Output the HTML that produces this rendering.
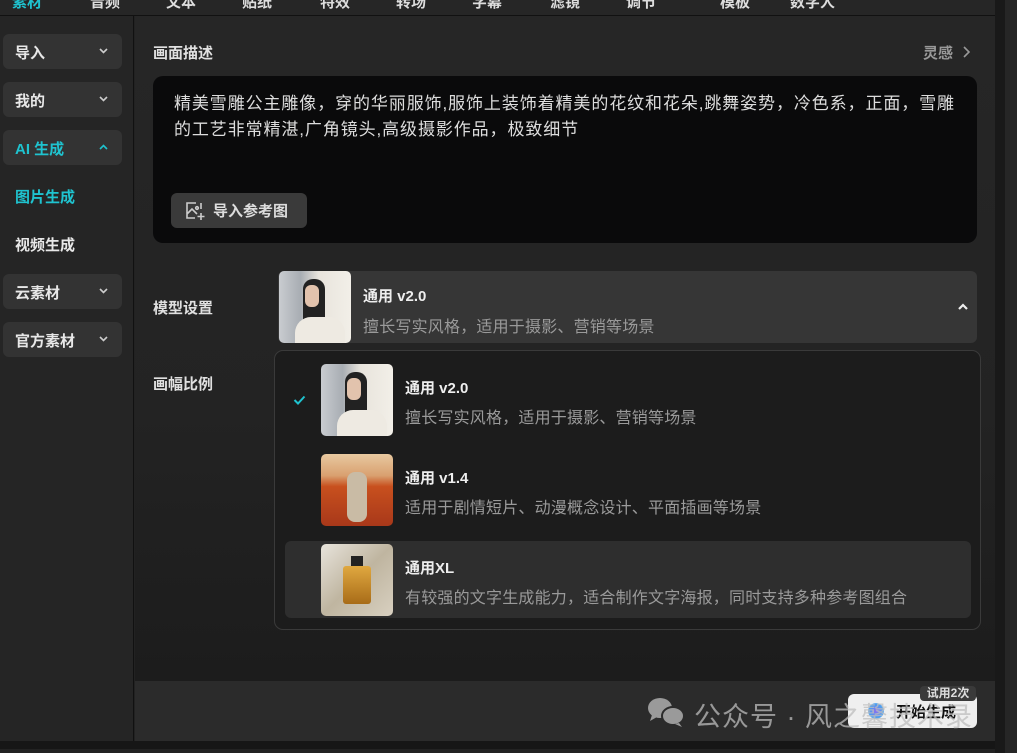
<!DOCTYPE html>
<html><head><meta charset="utf-8"><style>
*{margin:0;padding:0;box-sizing:border-box}
body{width:1017px;height:753px;overflow:hidden;background:#222;font-family:"Liberation Sans","Noto Sans CJK SC",sans-serif;position:relative;color:#ddd}
.a{position:absolute}
.top{left:0;top:0;width:995px;height:16px;background:#262626;border-bottom:1px solid #111;overflow:hidden}
.top span{position:absolute;top:-9px;font-size:15px;font-weight:bold;color:#ddd}
.side{left:0;top:16px;width:134px;height:725px;background:#252525;border-right:1px solid #111}
.sb{left:3px;width:119px;height:35px;background:#333;border-radius:6px;font-size:15px;font-weight:bold;color:#e8e8e8;padding:8px 0 0 12px}
.sb svg{position:absolute;right:14px;top:14px}
.main{left:135px;top:16px;width:860px;height:665px;background:linear-gradient(#262626 0%,#232323 60%,#1c1c1c 100%)}
.lbl{font-size:15px;font-weight:bold;color:#e0e0e0}
.thumb{border-radius:5px;overflow:hidden}
.t1{font-size:15px;font-weight:bold;color:#eee}
.t2{font-size:16px;color:#9a9a9a;letter-spacing:0.2px}
</style></head><body>
<div class="a top">
<span style="left:12px;color:#1fc3cf">素材</span><span style="left:90px">音频</span><span style="left:166px">文本</span><span style="left:242px">贴纸</span><span style="left:320px">特效</span><span style="left:396px">转场</span><span style="left:472px">字幕</span><span style="left:550px">滤镜</span><span style="left:626px">调节</span><span style="left:720px">模板</span><span style="left:790px">数字人</span>
</div>
<div class="a side"></div>
<div class="a sb" style="top:34px">导入<svg width="9" height="6" viewBox="0 0 9 6"><path d="M1 1l3.5 3.5L8 1" stroke="#ccc" stroke-width="1.6" fill="none"/></svg></div>
<div class="a sb" style="top:82px">我的<svg width="9" height="6" viewBox="0 0 9 6"><path d="M1 1l3.5 3.5L8 1" stroke="#ccc" stroke-width="1.6" fill="none"/></svg></div>
<div class="a sb" style="top:130px;color:#1fc3cf">AI 生成<svg width="9" height="6" viewBox="0 0 9 6"><path d="M1 5l3.5-3.5L8 5" stroke="#1fc3cf" stroke-width="1.6" fill="none"/></svg></div>
<div class="a" style="left:15px;top:186px;font-size:15px;font-weight:bold;color:#1fc3cf">图片生成</div>
<div class="a" style="left:15px;top:234px;font-size:15px;font-weight:bold;color:#e8e8e8">视频生成</div>
<div class="a sb" style="top:274px">云素材<svg width="9" height="6" viewBox="0 0 9 6"><path d="M1 1l3.5 3.5L8 1" stroke="#ccc" stroke-width="1.6" fill="none"/></svg></div>
<div class="a sb" style="top:322px">官方素材<svg width="9" height="6" viewBox="0 0 9 6"><path d="M1 1l3.5 3.5L8 1" stroke="#ccc" stroke-width="1.6" fill="none"/></svg></div>

<div class="a main"></div>
<div class="a" style="left:995px;top:0;width:10px;height:753px;background:#191919"></div>
<div class="a" style="left:1005px;top:0;width:12px;height:753px;background:#262626"></div>
<div class="a lbl" style="left:153px;top:42px">画面描述</div>
<div class="a" style="left:923px;top:42px;font-size:15px;font-weight:bold;color:#999">灵感</div>
<svg class="a" style="left:962px;top:45px" width="9" height="14" viewBox="0 0 9 14"><path d="M2 2l5 5-5 5" stroke="#999" stroke-width="1.6" fill="none"/></svg>
<div class="a" style="left:153px;top:76px;width:824px;height:167px;background:#0a0a0b;border-radius:10px"></div>
<div class="a" style="left:174px;top:91px;width:800px;font-size:17px;line-height:26px;color:#ddd;letter-spacing:0.9px;white-space:nowrap">精美雪雕公主雕像，穿的华丽服饰,服饰上装饰着精美的花纹和花朵,跳舞姿势，冷色系，正面，雪雕<br>的工艺非常精湛,广角镜头,高级摄影作品，极致细节</div>
<div class="a" style="left:171px;top:193px;width:136px;height:35px;background:#3a3a3a;border-radius:6px;font-size:15px;font-weight:bold;color:#ddd;padding:7px 0 0 42px">导入参考图</div>
<svg class="a" style="left:184px;top:200px" width="22" height="22" viewBox="0 0 22 22" fill="none" stroke="#ccc" stroke-width="1.6"><path d="M12 3H3v15h8M3 14l5-5 5 5"/><circle cx="13" cy="8" r="1.3"/><path d="M17 13v7M13.5 16.5h7M17 3v6"/></svg>

<div class="a lbl" style="left:153px;top:297px">模型设置</div>
<div class="a" style="left:278px;top:271px;width:699px;height:72px;background:#363636;border-radius:6px"></div>
<div class="a thumb" style="left:279px;top:271px;width:72px;height:72px;background:linear-gradient(90deg,#c9ccd0 0%,#a8adb3 30%,#e8e4dc 55%,#f2efe8 100%)"><div style="position:absolute;left:24px;top:8px;width:22px;height:46px;background:#222;border-radius:10px 10px 0 0"></div><div style="position:absolute;left:26px;top:14px;width:14px;height:22px;background:#e2c3ad;border-radius:6px"></div><div style="position:absolute;left:16px;top:46px;width:50px;height:30px;background:#eeeae2;border-radius:16px 16px 0 0"></div></div>
<div class="a t1" style="left:363px;top:285px">通用 v2.0</div>
<div class="a t2" style="left:363px;top:313px">擅长写实风格，适用于摄影、营销等场景</div>
<svg class="a" style="left:957px;top:303px" width="12" height="8" viewBox="0 0 12 8"><path d="M2 6l4-4 4 4" stroke="#eee" stroke-width="2.2" fill="none"/></svg>
<div class="a lbl" style="left:153px;top:373px">画幅比例</div>

<div class="a" style="left:274px;top:350px;width:707px;height:280px;background:#1c1c1c;border:1px solid #3a3a3a;border-radius:9px"></div>
<div class="a" style="left:285px;top:541px;width:686px;height:77px;background:#2e2e2e;border-radius:6px"></div>
<svg class="a" style="left:293px;top:395px" width="13" height="10" viewBox="0 0 13 10"><path d="M1.5 5l3.5 3.5L11.5 1.5" stroke="#1fc3cf" stroke-width="2" fill="none"/></svg>
<div class="a thumb" style="left:321px;top:364px;width:72px;height:72px;background:linear-gradient(90deg,#c9ccd0 0%,#a8adb3 30%,#e8e4dc 55%,#f2efe8 100%)"><div style="position:absolute;left:24px;top:8px;width:22px;height:46px;background:#222;border-radius:10px 10px 0 0"></div><div style="position:absolute;left:26px;top:14px;width:14px;height:22px;background:#e2c3ad;border-radius:6px"></div><div style="position:absolute;left:16px;top:46px;width:50px;height:30px;background:#eeeae2;border-radius:16px 16px 0 0"></div></div>
<div class="a thumb" style="left:321px;top:454px;width:72px;height:72px;background:linear-gradient(#e8c9a0 0%,#d9a070 30%,#c8501e 45%,#a8381a 100%)"><div style="position:absolute;left:26px;top:18px;width:20px;height:50px;background:#c9bba5;border-radius:8px"></div></div>
<div class="a thumb" style="left:321px;top:544px;width:72px;height:72px;background:linear-gradient(135deg,#e8e4dc,#bfb5a0 50%,#d8d0c0)"><div style="position:absolute;left:22px;top:22px;width:28px;height:38px;background:linear-gradient(#e0a840,#a86c18);border-radius:3px"></div><div style="position:absolute;left:30px;top:12px;width:12px;height:10px;background:#222"></div></div>
<div class="a t1" style="left:405px;top:377px">通用 v2.0</div>
<div class="a t2" style="left:405px;top:404px">擅长写实风格，适用于摄影、营销等场景</div>
<div class="a t1" style="left:405px;top:467px">通用 v1.4</div>
<div class="a t2" style="left:405px;top:494px">适用于剧情短片、动漫概念设计、平面插画等场景</div>
<div class="a t1" style="left:405px;top:557px">通用XL</div>
<div class="a t2" style="left:405px;top:584px">有较强的文字生成能力，适合制作文字海报，同时支持多种参考图组合</div>

<div class="a" style="left:135px;top:681px;width:860px;height:60px;background:#2b2b2b"></div>
<div class="a" style="left:0;top:741px;width:995px;height:8px;background:#161616"></div>
<div class="a" style="left:848px;top:694px;width:129px;height:34px;background:#efefef;border-radius:6px;font-size:15px;font-weight:bold;color:#111;padding:7px 0 0 48px">开始生成</div>
<div class="a" style="left:868px;top:703px;width:16px;height:16px;border-radius:50%;background:radial-gradient(#8a6cf0,#4aa0f0 60%,#e8e8f8)"></div>
<div class="a" style="left:920px;top:686px;width:56px;height:15px;background:#3a3a3a;border-radius:4px;font-size:12px;font-weight:bold;color:#ddd;text-align:center;line-height:15px">试用2次</div>
<svg class="a" style="left:646px;top:696px" width="40" height="32" viewBox="0 0 40 32" fill="#9a9a9a"><ellipse cx="14" cy="12" rx="12" ry="10"/><path d="M6 19l-2 6 7-4z"/><ellipse cx="27" cy="20" rx="11" ry="9" stroke="#2b2b2b" stroke-width="2"/><path d="M33 27l3 4-7-3z"/></svg>
<div class="a" style="left:694px;top:695px;font-size:27px;color:rgba(190,190,190,0.75);white-space:nowrap;letter-spacing:1px">公众号 · 风之馨技术录</div>
</body></html>
